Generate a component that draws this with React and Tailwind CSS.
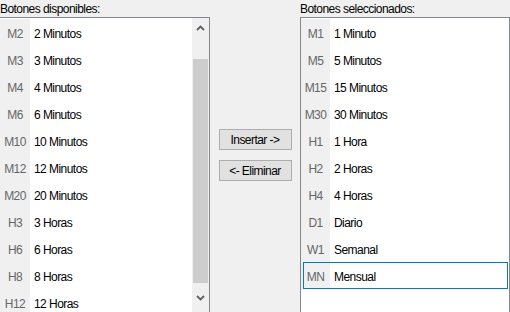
import React from "react";

const disponibles = [
  ["M2", "2 Minutos"],
  ["M3", "3 Minutos"],
  ["M4", "4 Minutos"],
  ["M6", "6 Minutos"],
  ["M10", "10 Minutos"],
  ["M12", "12 Minutos"],
  ["M20", "20 Minutos"],
  ["H3", "3 Horas"],
  ["H6", "6 Horas"],
  ["H8", "8 Horas"],
  ["H12", "12 Horas"],
];

const seleccionados = [
  ["M1", "1 Minuto"],
  ["M5", "5 Minutos"],
  ["M15", "15 Minutos"],
  ["M30", "30 Minutos"],
  ["H1", "1 Hora"],
  ["H2", "2 Horas"],
  ["H4", "4 Horas"],
  ["D1", "Diario"],
  ["W1", "Semanal"],
  ["MN", "Mensual"],
];

const Row = ({ code, label, selected, codeWidth }) => (
  <div className="flex h-[27px] shrink-0 relative">
    <div
      className={`${codeWidth} shrink-0 bg-[#f0f0f0] flex items-center justify-center pt-[2px] text-[#666666]`}
    >
      {code}
    </div>
    <div className="flex items-center pl-[4px] pt-[2px] text-black">{label}</div>
    {selected && (
      <div className="absolute left-[2px] right-[1px] top-0 bottom-0 border border-[#0078d7]" />
    )}
  </div>
);

const Chevron = ({ up }) => (
  <svg width="9" height="6" viewBox="0 0 9 6">
    <path
      d={up ? "M1 5 L4.5 1.5 L8 5" : "M1 1 L4.5 4.5 L8 1"}
      fill="none"
      stroke="#606060"
      strokeWidth="1.8"
    />
  </svg>
);

const App = () => {
  return (
    <div
      className="w-[510px] h-[312px] overflow-hidden bg-[#f0f0f0] flex text-[12px] tracking-[-0.55px]"
      style={{ fontFamily: '"Liberation Sans", Arial, sans-serif' }}
    >
      {/* Lista disponibles */}
      <div className="w-[210px] shrink-0 flex flex-col">
        <div className="h-[17px] flex items-center text-black">
          Botones disponibles:
        </div>
        <div className="h-[296px] bg-white border-t border-r border-[#828790] flex pt-[1px] overflow-hidden">
          <div className="flex-1 flex flex-col">
            {disponibles.map(([c, l]) => (
              <Row key={c} code={c} label={l} codeWidth="w-[30px]" />
            ))}
          </div>
          {/* Scrollbar */}
          <div className="w-[17px] shrink-0 bg-[#f0f0f0] flex flex-col -mt-[1px]">
            <div className="h-[19px] shrink-0 flex items-center justify-center">
              <Chevron up />
            </div>
            <div className="h-[22px] shrink-0" />
            <div className="h-[224px] shrink-0 mx-[1px] bg-[#cdcdcd]" />
            <div className="flex-1 flex items-center justify-center">
              <Chevron />
            </div>
          </div>
        </div>
      </div>

      {/* Botones centrales */}
      <div className="flex-1 flex flex-col items-center pt-[129px] gap-[10px]">
        <button className="w-[73px] h-[21px] bg-[#e1e1e1] border border-[#adadad] text-black">
          Insertar -&gt;
        </button>
        <button className="w-[73px] h-[21px] bg-[#e1e1e1] border border-[#adadad] text-black">
          &lt;- Eliminar
        </button>
      </div>

      {/* Lista seleccionados */}
      <div className="w-[210px] shrink-0 flex flex-col">
        <div className="h-[17px] flex items-center text-black">
          Botones seleccionados:
        </div>
        <div className="h-[296px] bg-white border-t border-l border-r border-[#828790] pt-[1px]">
          {seleccionados.map(([c, l]) => (
            <Row
              key={c}
              code={c}
              label={l}
              codeWidth="w-[29px]"
              selected={c === "MN"}
            />
          ))}
        </div>
      </div>
    </div>
  );
};

export default App;
